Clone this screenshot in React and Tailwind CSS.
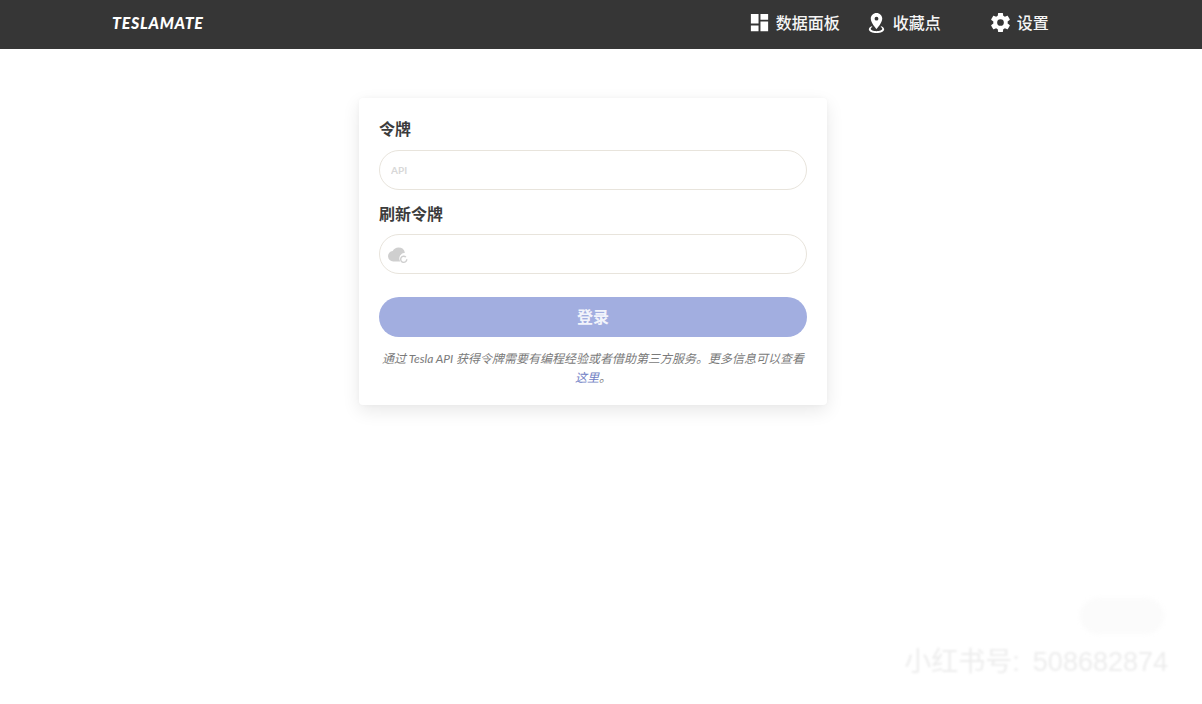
import React from 'react';

const cjk = "font-['Lato','Noto_Sans_CJK_SC',sans-serif]";

const NavItem = ({ path, label, className = '' }) => (
  <a className={`flex items-center gap-[5px] text-[16px] font-medium text-[#f5f5f5] ${className}`}>
    <svg viewBox="0 0 24 24" className="w-[23px] h-[23px] fill-white">
      <path d={path} />
    </svg>
    <span>{label}</span>
  </a>
);

const dashboard = 'M13,3V9H21V3M13,21H21V11H13M3,21H11V15H3M3,13H11V3H3V13Z';
const marker = 'M12,2C15.31,2 18,4.66 18,7.95C18,12.41 12,19 12,19C12,19 6,12.41 6,7.95C6,4.66 8.69,2 12,2M12,6A2,2 0 0,0 10,8A2,2 0 0,0 12,10A2,2 0 0,0 14,8A2,2 0 0,0 12,6M20,19C20,21.21 16.42,23 12,23C7.58,23 4,21.21 4,19C4,17.71 5.22,16.56 7.11,15.83L7.75,16.74C6.67,17.19 6,17.81 6,18.5C6,19.88 8.69,21 12,21C15.31,21 18,19.88 18,18.5C18,17.81 17.33,17.19 16.25,16.74L16.89,15.83C18.78,16.56 20,17.71 20,19Z';
const cog = 'M12,15.5A3.5,3.5 0 0,1 8.5,12A3.5,3.5 0 0,1 12,8.5A3.5,3.5 0 0,1 15.5,12A3.5,3.5 0 0,1 12,15.5M19.43,12.97C19.47,12.65 19.5,12.33 19.5,12C19.5,11.67 19.47,11.34 19.43,11L21.54,9.37C21.73,9.22 21.78,8.95 21.66,8.73L19.66,5.27C19.54,5.05 19.27,4.96 19.05,5.05L16.56,6.05C16.04,5.66 15.5,5.32 14.87,5.07L14.5,2.42C14.46,2.18 14.25,2 14,2H10C9.75,2 9.54,2.18 9.5,2.42L9.13,5.07C8.5,5.32 7.96,5.66 7.44,6.05L4.95,5.05C4.73,4.96 4.46,5.05 4.34,5.27L2.34,8.73C2.21,8.95 2.27,9.22 2.46,9.37L4.57,11C4.53,11.34 4.5,11.67 4.5,12C4.5,12.33 4.53,12.65 4.57,12.97L2.46,14.63C2.27,14.78 2.21,15.05 2.34,15.27L4.34,18.73C4.46,18.95 4.73,19.03 4.95,18.95L7.44,17.94C7.96,18.34 8.5,18.68 9.13,18.93L9.5,21.58C9.54,21.82 9.75,22 10,22H14C14.25,22 14.46,21.82 14.5,21.58L14.87,18.93C15.5,18.67 16.04,18.34 16.56,17.94L19.05,18.95C19.27,19.03 19.54,18.95 19.66,18.73L21.66,15.27C21.78,15.05 21.73,14.78 21.54,14.63L19.43,12.97Z';

export default function App() {
  return (
    <div className={`relative h-[704px] overflow-hidden bg-white ${cjk}`}>
      <nav className="flex items-center h-[49px] bg-[#363636] pl-[112px] pb-1">
        <a className="text-[16px] font-black italic tracking-[0.7px] text-white font-['Lato',sans-serif]">TESLAMATE</a>
        <div className="flex items-center ml-[544px]">
          <NavItem path={dashboard} label="数据面板" />
          <NavItem path={marker} label="收藏点" className="ml-[25px]" />
          <NavItem path={cog} label="设置" className="ml-[48px]" />
        </div>
      </nav>

      <main className="flex justify-center w-[1186px] pt-[49px]">
        <form className="w-[468px] h-[307px] rounded bg-white px-5 pt-[19px] shadow-[0_6px_18px_rgba(10,10,10,0.09),0_0_4px_rgba(10,10,10,0.03)]">
          <label className="block text-[16px] leading-[24px] font-bold text-[#3c3c3c]">令牌</label>
          <input
            placeholder="API"
            className="block w-full h-10 mt-[9px] rounded-full border border-[#e8e4dc] bg-white px-[11px] text-[10px] font-bold outline-none placeholder:text-[#d8d8d8]"
          />
          <label className="block mt-[12px] text-[16px] leading-[24px] font-bold text-[#3c3c3c]">刷新令牌</label>
          <div className="relative mt-[8px]">
            <input className="block w-full h-10 rounded-full border border-[#e8e4dc] bg-white outline-none" />
            <svg viewBox="0 0 24 24" className="absolute left-[9px] top-[10px] w-[21px] h-[21px]">
              <path fill="#cfcfcf" d="M19.35 10.04A7.49 7.49 0 0 0 12 4a7.5 7.5 0 0 0-6.65 4.04A6 6 0 0 0 6 20h8a6.5 6.5 0 0 1 5.35-9.96Z" />
              <path fill="none" stroke="#cfcfcf" strokeWidth="1.6" d="M21.5 17.5a3.5 3.5 0 1 1-1-2.5" />
            </svg>
          </div>
          <button type="button" className="block w-full h-10 mt-[23px] rounded-full bg-[#a2aee0] text-[16px] font-bold text-[#f2f4fb]">登录</button>
          <p className="mt-[12px] text-center text-[12px] leading-[19px] italic text-[#7a7a7a]">
            通过 Tesla API 获得令牌需要有编程经验或者借助第三方服务。更多信息可以查看
            <span className="text-[#6f80c4]">这里</span>。
          </p>
        </form>
      </main>

      {/* watermark */}
      <div className="absolute right-[38px] top-[598px] w-[84px] h-[36px] rounded-full bg-[#fbfbfb] blur-[2px]" />
      <div className="absolute right-[34px] top-[647px] whitespace-nowrap text-[27px] leading-[30px] text-[#ededed] blur-[1px] font-['Liberation_Sans','Noto_Sans_CJK_SC',sans-serif]">
        小红书号:<span className="ml-[13px]">508682874</span>
      </div>
    </div>
  );
}
